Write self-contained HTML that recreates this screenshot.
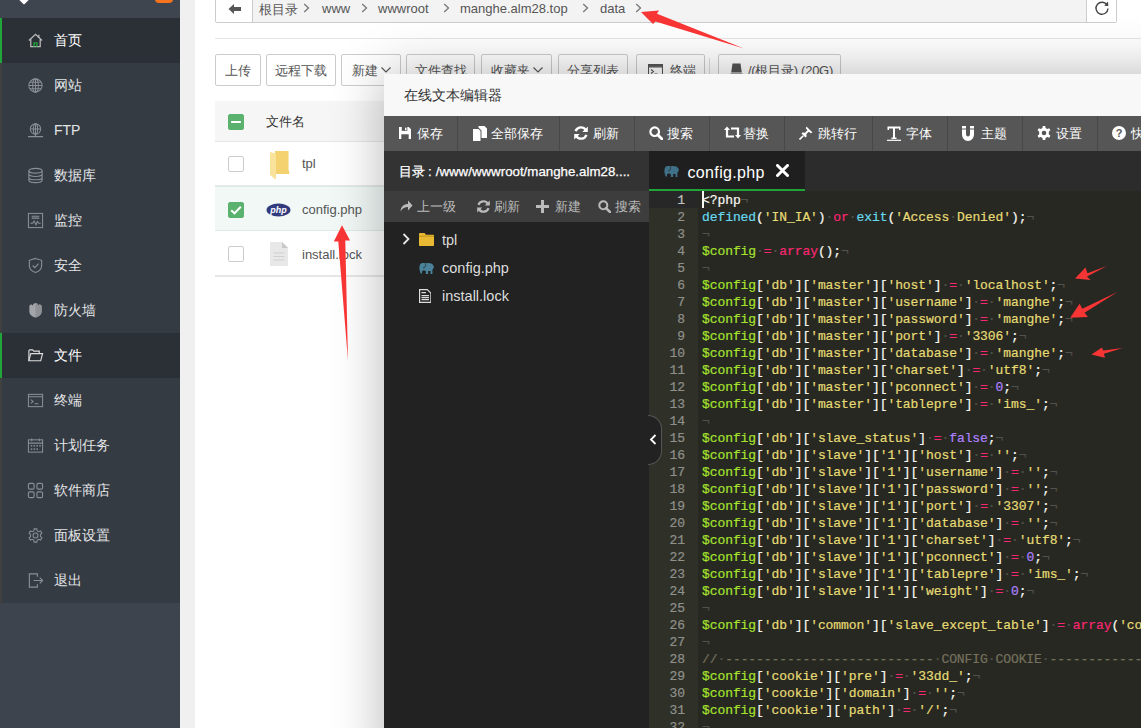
<!DOCTYPE html>
<html><head><meta charset="utf-8">
<style>
*{margin:0;padding:0;box-sizing:border-box}
html,body{width:1141px;height:728px;overflow:hidden;background:#f0f0f0;font-family:"Liberation Sans",sans-serif;font-size:14px;color:#333}
svg{display:block}
#side{position:absolute;left:0;top:0;width:180px;height:728px;background:#3d444d}
#side .top{position:absolute;left:0;top:0;width:180px;height:18px;background:#3e454e}
#side .logo{position:absolute;left:20px;top:-5px;width:8px;height:8px;background:#fff;border-radius:1px;transform:rotate(45deg)}
#side .badge{position:absolute;left:155px;top:-6px;width:18px;height:9px;background:#f7731c;border-radius:4px}
#menu{position:absolute;left:0;top:17.5px;width:180px;height:585px;background:#353b43}
#menu .it{position:absolute;left:0;width:180px;height:45px;color:#e3e5e7;font-size:14px;line-height:45px;padding-left:52px;border-left:2px solid #404040}
#menu .it.on{background:#2b2f36;border-left:2px solid #20a53a;color:#fff}
#menu .ic{position:absolute;left:24.7px;top:14px;width:17px;height:17px}
#main{position:absolute;left:195px;top:0;width:946px;height:728px;background:#fff}
#crumb{position:absolute;left:20px;top:-9px;width:902px;height:32px;background:#f3f3f3;border:1px solid #ccc;border-radius:0 0 2px 2px}
#crumb .back{position:absolute;left:0;top:0;width:37px;height:30px;background:#fff;border-right:1px solid #ccc}
#crumb .back svg{position:absolute;left:12px;top:10.5px}
#crumb .path{position:absolute;left:0;top:8px;height:20px;line-height:18px;font-size:13px;color:#555;white-space:nowrap}
#crumb .path span,#crumb .path i{position:absolute;top:0}
#crumb .path i{font-style:normal;width:7px;margin-left:-3.5px;top:3px}
#crumb .refresh{position:absolute;right:0;top:0;width:30px;height:30px;background:#fff;border-left:1px solid #ccc}
#crumb .refresh svg{position:absolute;left:7px;top:7.5px}
.hsep{position:absolute;left:20px;top:38px;width:926px;height:1px;background:#e6e6e6}
.btn{position:absolute;top:54px;height:32px;border:1px solid #ccc;border-radius:2px;background:#fff;font-size:13px;color:#555;line-height:29px;text-align:center;white-space:nowrap}
.btn .dd{display:inline-block;margin-left:3px;vertical-align:2px}
.btn{line-height:31.5px}
.btn .bi{display:inline-block;margin-right:8px;vertical-align:-2px}
.vsep{position:absolute;left:514px;top:58px;width:1px;height:24px;background:#ddd}
#thead{position:absolute;left:20px;top:100.5px;width:926px;height:41px;background:#f6f6f6;border-bottom:1px solid #e6e6e6}
#thead span{position:absolute;left:51px;top:0;line-height:42px;font-size:13.2px;color:#333}
#thead .cb{top:13px}
.cb{position:absolute;left:13px;top:14px;width:16px;height:16px;border:1px solid #ccc;border-radius:2px;background:#fff}
.cb.green{background:#5ab26e;border-color:#5ab26e}
.cb.green svg{position:absolute;left:-1px;top:-1px}
.cb .minus{position:absolute;left:2px;top:6px;width:10px;height:2px;background:#fff}
.row{position:absolute;left:20px;width:926px;height:45px;border-bottom:1px solid #e8e8e8}
.row.sel{background:#f1f8f6;border-top:1px solid #dbece6;border-bottom:1px solid #dbece6}
.row .cb{top:15px}
.row .fic{position:absolute;left:54px;top:9px}
.row span{position:absolute;left:87px;top:0;line-height:45px;font-size:13px;color:#555}
.row.r3 span{top:1px}
.tline{position:absolute;left:20px;width:926px;height:1px;background:#e6e6e6}
#dlg{position:absolute;left:384px;top:74px;width:900px;height:700px;background:#222;box-shadow:1px 1px 50px rgba(0,0,0,.3)}
#dlg .title{position:absolute;left:0;top:0;width:100%;height:42px;background:#f8f8f8;line-height:42px;padding-left:20px;font-size:14px;color:#333}
#dlg .tools{position:absolute;left:0;top:42px;width:100%;height:35px;background:#565656}
.tb{position:absolute;top:0;height:35px;border-right:1px solid #484848;color:#fff;font-size:13px}
.tb .ti{position:absolute;left:14.5px;top:9.5px}
.tb span{position:absolute;left:33px;top:0;line-height:35px;white-space:nowrap}
#lp{position:absolute;z-index:2;left:0;top:77px;width:264.5px;height:623px;background:#222}
#lp .lh{position:absolute;left:0;top:0;width:100%;height:39.5px;background:#333;color:#fff;font-size:13.3px;line-height:42px;-webkit-text-stroke:0.25px #fff;padding-left:15px;white-space:nowrap;overflow:hidden}
#lp .lt{position:absolute;left:0;top:39.5px;width:100%;height:31px;background:#3d3d3d;color:#bbb;font-size:13px}
#lp .lt span{position:absolute;top:0;line-height:31px;padding-left:17px;white-space:nowrap}
#lp .lt svg{position:absolute;left:0;top:9px}
#lp .tree{position:absolute;left:0;top:69px;width:100%}
.tr{position:absolute;left:0;width:100%;height:24px;color:#ddd;font-size:14.5px}
.tr .arr{position:absolute;left:18px;top:6px}
.tr .tic{position:absolute;left:35px;top:5px}
.tr span{position:absolute;left:58px;top:0;line-height:24px}
.handle{position:absolute;z-index:5;left:264px;top:264px;width:14px;height:50px;background:#222;border:1px solid #555;border-left:none;border-radius:0 16px 16px 0}
.handle svg{position:absolute;left:1px;top:17.5px}
#rp{position:absolute;left:264.5px;top:77px;width:700px;height:623px;background:#272822}
#rp .tabs{position:absolute;left:0;top:0;width:100%;height:40px;background:#2c2c2c}
.tab{position:absolute;left:0;top:0;width:156px;height:40px;background:#1f1f1f;border-bottom:2px solid #20a53a}
.tab .ti2{position:absolute;left:15px;top:14.7px}
.tab span{position:absolute;left:39px;top:1.5px;line-height:40px;font-size:16px;letter-spacing:0.35px;color:#fff}
.tab .x{position:absolute;left:127px;top:13px}
#ed{position:absolute;left:0;top:40px;width:100%;height:600px;background:#272822}
.gut{position:absolute;left:0;top:0;width:49px;height:600px;background:#2f3129;color:#8f908a;text-align:right}
.gut div{padding-right:12.5px}
.code{position:absolute;left:49px;top:0;width:700px;padding-left:4.5px}
.gut div,.code .ln{height:17px;padding-top:1px;line-height:17px;font-family:"Liberation Mono",monospace;font-size:13px;letter-spacing:-0.08px;white-space:pre}
.gut div.act{background:#272727;color:#c2c2bf}
.code .ln:first-child{background:#202020}
.code b{font-weight:normal}
.code .ln,.gut div{-webkit-text-stroke:0.2px currentColor}
.v{color:#a6e22e}.s{color:#e6db74}.k{color:#f92672}.f{color:#66d9ef}.c{color:#ae81ff}.p{color:#f8f8f2}.m{color:#75715e}.i{color:#52524d}
.code .ln{color:#f8f8f2}
.cursor{position:absolute;left:4px;top:0;width:2px;height:17px;background:#f8f8f0}
#arrows{position:absolute;left:0;top:0;width:1141px;height:728px}
</style></head><body>
<div id="side">
  <div class="top"><div class="logo"></div><div class="badge"></div></div>
  <div id="menu">
    <div class="it on" style="top:0"><svg class="ic" viewBox="0 0 18 18"><path d="M2 9 L9 2.5 L16 9 M4 7.5 V15.5 H14 V7.5" fill="none" stroke="#bbb" stroke-width="1.3"/><path d="M7.5 15.5 V11.5 H10.5 V15.5" fill="none" stroke="#20a53a" stroke-width="1.5"/><path d="M12.5 3 V6" stroke="#bbb" stroke-width="1.3"/></svg>首页</div>
    <div class="it" style="top:45px"><svg class="ic" viewBox="0 0 18 18"><g fill="none" stroke="#8a8f96" stroke-width="1.1"><circle cx="9" cy="9" r="7"/><ellipse cx="9" cy="9" rx="3" ry="7"/><path d="M2 9H16M3 5.5H15M3 12.5H15M9 2V16"/></g></svg>网站</div>
    <div class="it" style="top:90px"><svg class="ic" viewBox="0 0 18 18"><g fill="none" stroke="#8a8f96" stroke-width="1.1"><circle cx="9" cy="7.5" r="5.5"/><ellipse cx="9" cy="7.5" rx="2.3" ry="5.5"/><path d="M3.5 7.5H14.5M9 2V13M9 13V15.5M1 15.5H17"/></g></svg>FTP</div>
    <div class="it" style="top:135px"><svg class="ic" viewBox="0 0 18 18"><g fill="none" stroke="#8a8f96" stroke-width="1.2"><ellipse cx="9" cy="4" rx="7" ry="2.5"/><path d="M2 4V14C2 15.5 5 16.5 9 16.5S16 15.5 16 14V4M2 7.5C2 9 5 10 9 10S16 9 16 7.5M2 11C2 12.5 5 13.5 9 13.5S16 12.5 16 11"/></g></svg>数据库</div>
    <div class="it" style="top:180px"><svg class="ic" viewBox="0 0 18 18"><g fill="none" stroke="#8a8f96" stroke-width="1.1"><rect x="1.5" y="1.5" width="15" height="15"/><path d="M3.5 12 L6 12 L7.5 9.5 L9.5 13.5 L11 10 L12.5 12 L14.5 12M5 4.5H13M5 6.5H13"/></g></svg>监控</div>
    <div class="it" style="top:225px"><svg class="ic" viewBox="0 0 18 18"><g fill="none" stroke="#8a8f96" stroke-width="1.2"><path d="M9 1.5 L15.5 3.5 V9 C15.5 13 12 15.5 9 16.5 C6 15.5 2.5 13 2.5 9 V3.5 Z"/><path d="M6 9 L8.3 11.2 L12.2 7"/></g></svg>安全</div>
    <div class="it" style="top:270px"><svg class="ic" viewBox="0 0 18 18"><path d="M2.5 4 L4.5 2.5 L6.5 4 V2 L9 1 L11.5 2 V4 L13.5 2.5 L15.5 4 V10 C15.5 13.5 12 15.5 9 16.5 C6 15.5 2.5 13.5 2.5 10 Z" fill="#a3a5a8"/><path d="M9 1 V16.5 C12 15.5 15.5 13.5 15.5 10 V4 L13.5 2.5 L11.5 4 V2Z" fill="#8d9095"/></svg>防火墙</div>
    <div class="it on" style="top:315px"><svg class="ic" viewBox="0 0 18 18"><g fill="none" stroke="#ddd" stroke-width="1.2"><path d="M2 14.5 V4 C2 3.5 2.3 3 3 3 H6 L7.2 4.3 H13 V6.5"/><path d="M2 14.5 L4 7 H16.5 L14.5 14.5 Z"/></g></svg>文件</div>
    <div class="it" style="top:360px"><svg class="ic" viewBox="0 0 18 18"><g fill="none" stroke="#8a8f96" stroke-width="1.1"><rect x="1.5" y="2.5" width="15" height="13"/><path d="M1.5 5H16.5M4 8L6.5 10L4 12M8 12.5H12"/></g></svg>终端</div>
    <div class="it" style="top:405px"><svg class="ic" viewBox="0 0 18 18"><g fill="none" stroke="#8a8f96" stroke-width="1.1"><rect x="1.5" y="3" width="15" height="13"/><path d="M5 1.5V4.5M13 1.5V4.5M1.5 6.5H16.5"/></g><g fill="#8a8f96"><rect x="4" y="8.5" width="1.6" height="1.6"/><rect x="7" y="8.5" width="1.6" height="1.6"/><rect x="10" y="8.5" width="1.6" height="1.6"/><rect x="13" y="8.5" width="1.6" height="1.6"/><rect x="4" y="12" width="1.6" height="1.6"/><rect x="7" y="12" width="1.6" height="1.6"/><rect x="10" y="12" width="1.6" height="1.6"/></g></svg>计划任务</div>
    <div class="it" style="top:450px"><svg class="ic" viewBox="0 0 18 18"><g fill="none" stroke="#8a8f96" stroke-width="1.2"><rect x="1.5" y="1.5" width="6" height="6" rx="1.5"/><rect x="10.5" y="1.5" width="6" height="6" rx="1.5"/><rect x="1.5" y="10.5" width="6" height="6" rx="1.5"/><rect x="10.5" y="10.5" width="6" height="6" rx="1.5"/></g></svg>软件商店</div>
    <div class="it" style="top:495px"><svg class="ic" viewBox="0 0 18 18"><g fill="none" stroke="#8a8f96" stroke-width="1.1"><path d="M7.6 1.5H10.4L10.8 3.6L12.4 4.5L14.4 3.7L15.8 6.1L14.2 7.5V9.5L15.8 10.9L14.4 13.3L12.4 12.5L10.8 13.4L10.4 15.5H7.6L7.2 13.4L5.6 12.5L3.6 13.3L2.2 10.9L3.8 9.5V7.5L2.2 6.1L3.6 3.7L5.6 4.5L7.2 3.6Z" transform="translate(0 0.5)"/><circle cx="9" cy="9" r="2.6"/></g></svg>面板设置</div>
    <div class="it" style="top:540px"><svg class="ic" viewBox="0 0 18 18"><g fill="none" stroke="#8a8f96" stroke-width="1.2"><path d="M11 5V2H2.5V16H11V13"/><path d="M7 9H16.5M13.5 6L16.5 9L13.5 12"/></g></svg>退出</div>
  </div>
</div>
<div id="main">
  <div id="crumb">
    <div class="back"><svg width="14" height="12" viewBox="0 0 14 12"><path d="M0.5 6 L6 1 V4 H13 V8 H6 V11 Z" fill="#555"/></svg></div>
    <div class="path"><span style="left:43px;font-size:12.6px;top:0.5px">根目录</span><i style="left:90.5px"><svg width="7" height="10" viewBox="0 0 7 10"><path d="M1.2 1 L5.5 5 L1.2 9" fill="none" stroke="#777" stroke-width="1.3"/></svg></i><span style="left:106px">www</span><i style="left:148.0px"><svg width="7" height="10" viewBox="0 0 7 10"><path d="M1.2 1 L5.5 5 L1.2 9" fill="none" stroke="#777" stroke-width="1.3"/></svg></i><span style="left:162px">wwwroot</span><i style="left:230.7px"><svg width="7" height="10" viewBox="0 0 7 10"><path d="M1.2 1 L5.5 5 L1.2 9" fill="none" stroke="#777" stroke-width="1.3"/></svg></i><span style="left:244px">manghe.alm28.top</span><i style="left:369.6px"><svg width="7" height="10" viewBox="0 0 7 10"><path d="M1.2 1 L5.5 5 L1.2 9" fill="none" stroke="#777" stroke-width="1.3"/></svg></i><span style="left:384px">data</span><i style="left:422.0px"><svg width="7" height="10" viewBox="0 0 7 10"><path d="M1.2 1 L5.5 5 L1.2 9" fill="none" stroke="#777" stroke-width="1.3"/></svg></i></div>
    <div class="refresh"><svg width="16" height="16" viewBox="0 0 16 16"><path d="M13.2 5.2 A6 6 0 1 0 14 8.5" fill="none" stroke="#444" stroke-width="1.4"/><path d="M10.2 5.8 L14.3 6 L14 1.6 Z" fill="#444"/></svg></div>
  </div>
  <div class="hsep"></div>
  <div class="btn" style="left:20px;width:46px">上传</div>
  <div class="btn" style="left:71px;width:70px">远程下载</div>
  <div class="btn" style="left:146px;width:60px">新建<svg class="dd" width="10" height="6" viewBox="0 0 10 6"><path d="M0.5 0.5 L5 5 L9.5 0.5" fill="none" stroke="#555" stroke-width="1.1"/></svg></div>
  <div class="btn" style="left:211px;width:69px">文件查找</div>
  <div class="btn" style="left:286px;width:71px">收藏夹<svg class="dd" width="10" height="6" viewBox="0 0 10 6"><path d="M0.5 0.5 L5 5 L9.5 0.5" fill="none" stroke="#555" stroke-width="1.1"/></svg></div>
  <div class="btn" style="left:363px;width:70px">分享列表</div>
  <div class="btn" style="left:441px;width:69px"><svg class="bi" width="15" height="13" viewBox="0 0 15 13" style="margin-right:7px;margin-left:3px"><g fill="none" stroke="#555" stroke-width="1.1"><rect x="0.5" y="0.5" width="14" height="12"/><path d="M0.5 3H14.5M3 5.5L5.5 7.5L3 9.5M6.5 10H9.5"/></g><path d="M1 1H14V2.8H1Z" fill="#555"/></svg>终端</div>
  <div class="vsep"></div>
  <div class="btn" style="left:523px;width:123px"><svg class="bi" width="13" height="14" viewBox="0 0 13 14" style="margin-right:5px;margin-left:4px"><path d="M2.5 0.5H10.5L11.8 9.5H1.2Z M0.5 10.5H12.5V13.5H0.5Z" fill="#555"/></svg><span style="letter-spacing:-0.25px">/(根目录) (20G)</span></div>
  <div id="thead"><div class="cb green"><div class="minus"></div></div><span>文件名</span></div>
  <div class="row" style="top:141px"><div class="cb"></div><svg class="fic" width="20" height="29" viewBox="0 0 20 29" style="left:54.5px;top:10px"><path d="M5 0 H18.5 V18 L19.5 23 H5 Z" fill="#f3d26f"/><path d="M0 1 L6 2.5 V28 L5.5 28.5 L0 24 Z" fill="#f9e29a"/></svg><span>tpl</span></div>
  <div class="row sel" style="top:186px"><div class="cb green"><svg width="16" height="16" viewBox="0 0 16 16"><path d="M3.2 8.2 L6.5 11.3 L12.8 4.8" fill="none" stroke="#fff" stroke-width="2"/></svg></div><svg class="fic" width="25" height="14" viewBox="0 0 25 14" style="top:16px;left:51px"><ellipse cx="12.5" cy="7" rx="12" ry="6.5" fill="#313b7e"/><text x="12.5" y="10" font-family="Liberation Sans" font-size="9" font-style="italic" font-weight="bold" fill="#fff" text-anchor="middle">php</text></svg><span>config.php</span></div>
  <div class="row r3" style="top:231px"><div class="cb"></div><svg class="fic" width="18" height="24" viewBox="0 0 18 24" style="top:11px;left:55px"><path d="M0 0 H12 L18 6 V24 H0 Z" fill="#e8e8e8"/><path d="M12 0 L18 6 H12Z" fill="#c8c8c8"/><path d="M3.5 11H14.5M3.5 14.5H14.5M3.5 18H14.5" stroke="#d0d0d0" stroke-width="1.2"/></svg><span>install.lock</span></div>
  <div class="tline" style="top:276px"></div>
</div>
<div id="dlg">
  <div class="title">在线文本编辑器</div>
  <div class="tools">
    <div class="tb" style="left:0;width:74px"><svg class="ti" width="12" height="12" viewBox="0 0 13 14" preserveAspectRatio="none" style="left:15px;top:11px"><path d="M0 0H10.5L13 2.5V14H0Z" fill="#fff"/><rect x="3" y="0" width="6" height="4.5" fill="#565656"/><rect x="6.5" y="0.8" width="1.6" height="3" fill="#fff"/><rect x="2.5" y="8.5" width="8" height="5.5" fill="#565656"/></svg><span>保存</span></div>
    <div class="tb" style="left:74px;width:101.5px"><svg class="ti" width="14" height="15" viewBox="0 0 14 15"><path d="M0 3H5.5L7.5 5V15H0Z" fill="#fff"/><path d="M5.5 0H11.5L14 2.5V12H8.5V4.5L5.5 1.5Z" fill="#fff"/></svg><span>全部保存</span></div>
    <div class="tb" style="left:175.5px;width:75px"><svg class="ti" width="14" height="14" viewBox="0 0 14 14"><path d="M11.8 4.2 A5.6 5.6 0 0 0 1.6 5.2" fill="none" stroke="#fff" stroke-width="2.4"/><path d="M2.2 9.8 A5.6 5.6 0 0 0 12.4 8.8" fill="none" stroke="#fff" stroke-width="2.4"/><path d="M13.8 0.5 V6 H8.3Z" fill="#fff"/><path d="M0.2 13.5 V8 H5.7Z" fill="#fff"/></svg><span>刷新</span></div>
    <div class="tb" style="left:250px;width:75.5px"><svg class="ti" width="14" height="14" viewBox="0 0 14 14"><circle cx="5.7" cy="5.7" r="4.3" fill="none" stroke="#fff" stroke-width="2.2"/><path d="M8.7 8.7 L13 13" stroke="#fff" stroke-width="2.8" stroke-linecap="round"/></svg><span>搜索</span></div>
    <div class="tb" style="left:325.5px;width:75px"><svg class="ti" width="17" height="13" viewBox="0 0 17 13"><path d="M3 3V10.5H10" fill="none" stroke="#fff" stroke-width="2.2"/><path d="M0 4L3 0.5L6 4Z" fill="#fff"/><path d="M14 10V2.5H7" fill="none" stroke="#fff" stroke-width="2.2"/><path d="M11 9L14 12.5L17 9Z" fill="#fff"/></svg><span>替换</span></div>
    <div class="tb" style="left:400.5px;width:88px"><svg class="ti" width="14" height="14" viewBox="0 0 14 14"><path d="M7.5 0.5 L13.5 6.5 L11.8 7.2 L9.8 5.7 L7.4 8.1 L7.6 10.6 L6.5 11.6 L2.5 7.6 L3.5 6.5 L6 6.7 L8.4 4.3 L6.8 2.2Z" fill="#fff"/><path d="M4.3 9.7 L0.5 13.5" stroke="#fff" stroke-width="1.6"/></svg><span>跳转行</span></div>
    <div class="tb" style="left:488.5px;width:75px"><svg class="ti" width="14" height="15" viewBox="0 0 14 15"><path d="M0.5 0.5H13.5V4H12V2.5H8V11.5H9.5V13H4.5V11.5H6V2.5H2V4H0.5Z" fill="#fff"/><path d="M0 14.3H14" stroke="#fff" stroke-width="1.2"/></svg><span>字体</span></div>
    <div class="tb" style="left:563.5px;width:75px"><svg class="ti" width="12" height="15" viewBox="0 0 12 15"><path d="M0 0H4V8C4 9.5 4.8 10.5 6 10.5S8 9.5 8 8V0H12V8C12 12 9.5 15 6 15S0 12 0 8Z" fill="#fff"/><path d="M0 3H4M8 3H12" stroke="#565656" stroke-width="1"/></svg><span>主题</span></div>
    <div class="tb" style="left:638.5px;width:75px"><svg class="ti" width="14" height="14" viewBox="0 0 14 14"><path d="M5.8 0H8.2L8.6 2.1L10.2 3L12.2 2.2L13.4 4.3L11.8 5.7V8.3L13.4 9.7L12.2 11.8L10.2 11L8.6 11.9L8.2 14H5.8L5.4 11.9L3.8 11L1.8 11.8L0.6 9.7L2.2 8.3V5.7L0.6 4.3L1.8 2.2L3.8 3L5.4 2.1Z" fill="#fff"/><circle cx="7" cy="7" r="2.3" fill="#565656"/></svg><span>设置</span></div>
    <div class="tb" style="left:713.5px;width:75px"><svg class="ti" width="14" height="14" viewBox="0 0 14 14"><circle cx="7" cy="7" r="7" fill="#fff"/><text x="7" y="11" font-family="Liberation Sans" font-weight="bold" font-size="11" fill="#565656" text-anchor="middle">?</text></svg><span>快捷键</span></div>
  </div>
  <div id="lp">
    <div class="lh">目录<span style="margin:0 4px 0 3px">:</span>/www/wwwroot/manghe.alm28....</div>
    <div class="lt">
      <span style="left:16px"><svg width="13" height="12" viewBox="0 0 13 12"><path d="M0.5 11.5 C1 6 4 4 8 4 V0.5 L12.5 5.5 L8 10.5 V7 C5 7 2.5 8 0.5 11.5Z" fill="#bbb"/></svg>上一级</span>
      <span style="left:93px"><svg width="13" height="13" viewBox="0 0 14 14"><path d="M11.8 4.2 A5.6 5.6 0 0 0 1.6 5.2" fill="none" stroke="#bbb" stroke-width="2.4"/><path d="M2.2 9.8 A5.6 5.6 0 0 0 12.4 8.8" fill="none" stroke="#bbb" stroke-width="2.4"/><path d="M13.8 0.5 V6 H8.3Z" fill="#bbb"/><path d="M0.2 13.5 V8 H5.7Z" fill="#bbb"/></svg>刷新</span>
      <span style="left:152px;padding-left:19px"><svg width="13" height="13" viewBox="0 0 13 13"><path d="M5 0H8V5H13V8H8V13H5V8H0V5H5Z" fill="#bbb"/></svg>新建</span>
      <span style="left:214px"><svg width="13" height="13" viewBox="0 0 14 14"><circle cx="5.7" cy="5.7" r="4.3" fill="none" stroke="#bbb" stroke-width="2.2"/><path d="M8.7 8.7 L13 13" stroke="#bbb" stroke-width="2.8" stroke-linecap="round"/></svg>搜索</span>
    </div>
    <div class="tree">
      <div class="tr" style="top:8px"><svg class="arr" width="8" height="12" viewBox="0 0 8 12" style="top:5px"><path d="M1.5 1 L6.5 6 L1.5 11" fill="none" stroke="#e6e6e6" stroke-width="1.8"/></svg><svg class="tic" width="15" height="13" viewBox="0 0 15 13"><path d="M0 1C0 0.5 0.4 0 1 0H5.5L7 1.8H14C14.6 1.8 15 2.2 15 2.8V12C15 12.6 14.6 13 14 13H1C0.4 13 0 12.6 0 12Z" fill="#e9b934"/><path d="M0 3.2H15" stroke="#b88b12" stroke-width="0.8"/></svg><span>tpl</span></div>
      <div class="tr" style="top:36px"><svg class="tic" width="15" height="11" viewBox="0 0 14.3 10.4" style="top:7px"><path d="M1 1.5 C1.5 0.3 3 0 4.5 0 L6.5 0.2 C7 0.1 7.5 0 8.5 0 C11.5 0 13.5 1 14.3 3.5 L13.5 5.5 L12.8 6.5 V10.4 H11 V7.5 H8.7 V10.4 H6.5 V7.5 L5 7 L4 7.2 L3 7.5 L2.8 10 H1.5 L1 8 C0.3 6.5 0 4 1 1.5 Z" fill="#4a8299"/><path d="M6.6 0.4 C6 2 6.2 3.8 5 4.6 L3.8 4.4" fill="none" stroke="#222" stroke-width="0.6"/></svg><span>config.php</span></div>
      <div class="tr" style="top:64px"><svg class="tic" width="12.5" height="14" viewBox="0 0 12.5 14" style="left:34.5px;top:5px"><path d="M0.6 0.6H8.3L11.9 4.2V13.4H0.6Z" fill="none" stroke="#ddd" stroke-width="1.2"/><path d="M2.5 3.6H7M2.5 6.6H10M2.5 8.6H10M2.5 10.6H10" stroke="#ddd" stroke-width="1.1"/></svg><span>install.lock</span></div>
    </div>
    <div class="handle"><svg width="8" height="11" viewBox="0 0 8 11"><path d="M6.5 1 L2 5.5 L6.5 10" fill="none" stroke="#fff" stroke-width="1.8"/></svg></div>
  </div>
  <div id="rp">
    <div class="tabs"><div class="tab"><svg class="ti2" width="15" height="11" viewBox="0 0 14.3 10.4"><path d="M1 1.5 C1.5 0.3 3 0 4.5 0 L6.5 0.2 C7 0.1 7.5 0 8.5 0 C11.5 0 13.5 1 14.3 3.5 L13.5 5.5 L12.8 6.5 V10.4 H11 V7.5 H8.7 V10.4 H6.5 V7.5 L5 7 L4 7.2 L3 7.5 L2.8 10 H1.5 L1 8 C0.3 6.5 0 4 1 1.5 Z" fill="#3f7189"/><path d="M6.6 0.4 C6 2 6.2 3.8 5 4.6 L3.8 4.4" fill="none" stroke="#1f1f1f" stroke-width="0.6"/></svg><span>config.php</span><svg class="x" width="13" height="13" viewBox="0 0 13 13"><path d="M1.5 1.5L11.5 11.5M11.5 1.5L1.5 11.5" stroke="#fff" stroke-width="3" stroke-linecap="round"/></svg></div></div>
    <div id="ed">
      <div class="gut"><div class="act">1</div><div>2</div><div>3</div><div>4</div><div>5</div><div>6</div><div>7</div><div>8</div><div>9</div><div>10</div><div>11</div><div>12</div><div>13</div><div>14</div><div>15</div><div>16</div><div>17</div><div>18</div><div>19</div><div>20</div><div>21</div><div>22</div><div>23</div><div>24</div><div>25</div><div>26</div><div>27</div><div>28</div><div>29</div><div>30</div><div>31</div><div>32</div><div>33</div></div>
      <div class="code"><div class="cursor"></div><div class="ln">&lt;?php<b class="i">¬</b></div>
<div class="ln"><b class="f">defined</b><b class="p">(</b><b class="s">&#x27;IN_IA&#x27;</b><b class="p">)</b><b class="i">·</b><b class="k">or</b><b class="i">·</b><b class="f">exit</b><b class="p">(</b><b class="s">&#x27;Access</b><b class="i">·</b><b class="s">Denied&#x27;</b><b class="p">);</b><b class="i">¬</b></div>
<div class="ln"><b class="i">¬</b></div>
<div class="ln"><b class="v">$config</b><b class="i">·</b><b class="k">=</b><b class="i">·</b><b class="k">array</b><b class="p">();</b><b class="i">¬</b></div>
<div class="ln"><b class="i">¬</b></div>
<div class="ln"><b class="v">$config</b><b class="p">[</b><b class="s">&#x27;db&#x27;</b><b class="p">]</b><b class="p">[</b><b class="s">&#x27;master&#x27;</b><b class="p">]</b><b class="p">[</b><b class="s">&#x27;host&#x27;</b><b class="p">]</b><b class="i">·</b><b class="k">=</b><b class="i">·</b><b class="s">&#x27;localhost&#x27;</b><b class="p">;</b><b class="i">¬</b></div>
<div class="ln"><b class="v">$config</b><b class="p">[</b><b class="s">&#x27;db&#x27;</b><b class="p">]</b><b class="p">[</b><b class="s">&#x27;master&#x27;</b><b class="p">]</b><b class="p">[</b><b class="s">&#x27;username&#x27;</b><b class="p">]</b><b class="i">·</b><b class="k">=</b><b class="i">·</b><b class="s">&#x27;manghe&#x27;</b><b class="p">;</b><b class="i">¬</b></div>
<div class="ln"><b class="v">$config</b><b class="p">[</b><b class="s">&#x27;db&#x27;</b><b class="p">]</b><b class="p">[</b><b class="s">&#x27;master&#x27;</b><b class="p">]</b><b class="p">[</b><b class="s">&#x27;password&#x27;</b><b class="p">]</b><b class="i">·</b><b class="k">=</b><b class="i">·</b><b class="s">&#x27;manghe&#x27;</b><b class="p">;</b><b class="i">¬</b></div>
<div class="ln"><b class="v">$config</b><b class="p">[</b><b class="s">&#x27;db&#x27;</b><b class="p">]</b><b class="p">[</b><b class="s">&#x27;master&#x27;</b><b class="p">]</b><b class="p">[</b><b class="s">&#x27;port&#x27;</b><b class="p">]</b><b class="i">·</b><b class="k">=</b><b class="i">·</b><b class="s">&#x27;3306&#x27;</b><b class="p">;</b><b class="i">¬</b></div>
<div class="ln"><b class="v">$config</b><b class="p">[</b><b class="s">&#x27;db&#x27;</b><b class="p">]</b><b class="p">[</b><b class="s">&#x27;master&#x27;</b><b class="p">]</b><b class="p">[</b><b class="s">&#x27;database&#x27;</b><b class="p">]</b><b class="i">·</b><b class="k">=</b><b class="i">·</b><b class="s">&#x27;manghe&#x27;</b><b class="p">;</b><b class="i">¬</b></div>
<div class="ln"><b class="v">$config</b><b class="p">[</b><b class="s">&#x27;db&#x27;</b><b class="p">]</b><b class="p">[</b><b class="s">&#x27;master&#x27;</b><b class="p">]</b><b class="p">[</b><b class="s">&#x27;charset&#x27;</b><b class="p">]</b><b class="i">·</b><b class="k">=</b><b class="i">·</b><b class="s">&#x27;utf8&#x27;</b><b class="p">;</b><b class="i">¬</b></div>
<div class="ln"><b class="v">$config</b><b class="p">[</b><b class="s">&#x27;db&#x27;</b><b class="p">]</b><b class="p">[</b><b class="s">&#x27;master&#x27;</b><b class="p">]</b><b class="p">[</b><b class="s">&#x27;pconnect&#x27;</b><b class="p">]</b><b class="i">·</b><b class="k">=</b><b class="i">·</b><b class="c">0</b><b class="p">;</b><b class="i">¬</b></div>
<div class="ln"><b class="v">$config</b><b class="p">[</b><b class="s">&#x27;db&#x27;</b><b class="p">]</b><b class="p">[</b><b class="s">&#x27;master&#x27;</b><b class="p">]</b><b class="p">[</b><b class="s">&#x27;tablepre&#x27;</b><b class="p">]</b><b class="i">·</b><b class="k">=</b><b class="i">·</b><b class="s">&#x27;ims_&#x27;</b><b class="p">;</b><b class="i">¬</b></div>
<div class="ln"><b class="i">¬</b></div>
<div class="ln"><b class="v">$config</b><b class="p">[</b><b class="s">&#x27;db&#x27;</b><b class="p">]</b><b class="p">[</b><b class="s">&#x27;slave_status&#x27;</b><b class="p">]</b><b class="i">·</b><b class="k">=</b><b class="i">·</b><b class="c">false</b><b class="p">;</b><b class="i">¬</b></div>
<div class="ln"><b class="v">$config</b><b class="p">[</b><b class="s">&#x27;db&#x27;</b><b class="p">]</b><b class="p">[</b><b class="s">&#x27;slave&#x27;</b><b class="p">]</b><b class="p">[</b><b class="s">&#x27;1&#x27;</b><b class="p">]</b><b class="p">[</b><b class="s">&#x27;host&#x27;</b><b class="p">]</b><b class="i">·</b><b class="k">=</b><b class="i">·</b><b class="s">&#x27;&#x27;</b><b class="p">;</b><b class="i">¬</b></div>
<div class="ln"><b class="v">$config</b><b class="p">[</b><b class="s">&#x27;db&#x27;</b><b class="p">]</b><b class="p">[</b><b class="s">&#x27;slave&#x27;</b><b class="p">]</b><b class="p">[</b><b class="s">&#x27;1&#x27;</b><b class="p">]</b><b class="p">[</b><b class="s">&#x27;username&#x27;</b><b class="p">]</b><b class="i">·</b><b class="k">=</b><b class="i">·</b><b class="s">&#x27;&#x27;</b><b class="p">;</b><b class="i">¬</b></div>
<div class="ln"><b class="v">$config</b><b class="p">[</b><b class="s">&#x27;db&#x27;</b><b class="p">]</b><b class="p">[</b><b class="s">&#x27;slave&#x27;</b><b class="p">]</b><b class="p">[</b><b class="s">&#x27;1&#x27;</b><b class="p">]</b><b class="p">[</b><b class="s">&#x27;password&#x27;</b><b class="p">]</b><b class="i">·</b><b class="k">=</b><b class="i">·</b><b class="s">&#x27;&#x27;</b><b class="p">;</b><b class="i">¬</b></div>
<div class="ln"><b class="v">$config</b><b class="p">[</b><b class="s">&#x27;db&#x27;</b><b class="p">]</b><b class="p">[</b><b class="s">&#x27;slave&#x27;</b><b class="p">]</b><b class="p">[</b><b class="s">&#x27;1&#x27;</b><b class="p">]</b><b class="p">[</b><b class="s">&#x27;port&#x27;</b><b class="p">]</b><b class="i">·</b><b class="k">=</b><b class="i">·</b><b class="s">&#x27;3307&#x27;</b><b class="p">;</b><b class="i">¬</b></div>
<div class="ln"><b class="v">$config</b><b class="p">[</b><b class="s">&#x27;db&#x27;</b><b class="p">]</b><b class="p">[</b><b class="s">&#x27;slave&#x27;</b><b class="p">]</b><b class="p">[</b><b class="s">&#x27;1&#x27;</b><b class="p">]</b><b class="p">[</b><b class="s">&#x27;database&#x27;</b><b class="p">]</b><b class="i">·</b><b class="k">=</b><b class="i">·</b><b class="s">&#x27;&#x27;</b><b class="p">;</b><b class="i">¬</b></div>
<div class="ln"><b class="v">$config</b><b class="p">[</b><b class="s">&#x27;db&#x27;</b><b class="p">]</b><b class="p">[</b><b class="s">&#x27;slave&#x27;</b><b class="p">]</b><b class="p">[</b><b class="s">&#x27;1&#x27;</b><b class="p">]</b><b class="p">[</b><b class="s">&#x27;charset&#x27;</b><b class="p">]</b><b class="i">·</b><b class="k">=</b><b class="i">·</b><b class="s">&#x27;utf8&#x27;</b><b class="p">;</b><b class="i">¬</b></div>
<div class="ln"><b class="v">$config</b><b class="p">[</b><b class="s">&#x27;db&#x27;</b><b class="p">]</b><b class="p">[</b><b class="s">&#x27;slave&#x27;</b><b class="p">]</b><b class="p">[</b><b class="s">&#x27;1&#x27;</b><b class="p">]</b><b class="p">[</b><b class="s">&#x27;pconnect&#x27;</b><b class="p">]</b><b class="i">·</b><b class="k">=</b><b class="i">·</b><b class="c">0</b><b class="p">;</b><b class="i">¬</b></div>
<div class="ln"><b class="v">$config</b><b class="p">[</b><b class="s">&#x27;db&#x27;</b><b class="p">]</b><b class="p">[</b><b class="s">&#x27;slave&#x27;</b><b class="p">]</b><b class="p">[</b><b class="s">&#x27;1&#x27;</b><b class="p">]</b><b class="p">[</b><b class="s">&#x27;tablepre&#x27;</b><b class="p">]</b><b class="i">·</b><b class="k">=</b><b class="i">·</b><b class="s">&#x27;ims_&#x27;</b><b class="p">;</b><b class="i">¬</b></div>
<div class="ln"><b class="v">$config</b><b class="p">[</b><b class="s">&#x27;db&#x27;</b><b class="p">]</b><b class="p">[</b><b class="s">&#x27;slave&#x27;</b><b class="p">]</b><b class="p">[</b><b class="s">&#x27;1&#x27;</b><b class="p">]</b><b class="p">[</b><b class="s">&#x27;weight&#x27;</b><b class="p">]</b><b class="i">·</b><b class="k">=</b><b class="i">·</b><b class="c">0</b><b class="p">;</b><b class="i">¬</b></div>
<div class="ln"><b class="i">¬</b></div>
<div class="ln"><b class="v">$config</b><b class="p">[</b><b class="s">&#x27;db&#x27;</b><b class="p">]</b><b class="p">[</b><b class="s">&#x27;common&#x27;</b><b class="p">]</b><b class="p">[</b><b class="s">&#x27;slave_except_table&#x27;</b><b class="p">]</b><b class="i">·</b><b class="k">=</b><b class="i">·</b><b class="k">array</b><b class="p">(</b><b class="s">&#x27;common_session&#x27;</b></div>
<div class="ln"><b class="i">¬</b></div>
<div class="ln"><b class="m">//</b><b class="i">·</b><b class="m">---------------------------</b><b class="i">·</b><b class="m">CONFIG</b><b class="i">·</b><b class="m">COOKIE</b><b class="i">·</b><b class="m">---------------------------</b></div>
<div class="ln"><b class="v">$config</b><b class="p">[</b><b class="s">&#x27;cookie&#x27;</b><b class="p">]</b><b class="p">[</b><b class="s">&#x27;pre&#x27;</b><b class="p">]</b><b class="i">·</b><b class="k">=</b><b class="i">·</b><b class="s">&#x27;33dd_&#x27;</b><b class="p">;</b><b class="i">¬</b></div>
<div class="ln"><b class="v">$config</b><b class="p">[</b><b class="s">&#x27;cookie&#x27;</b><b class="p">]</b><b class="p">[</b><b class="s">&#x27;domain&#x27;</b><b class="p">]</b><b class="i">·</b><b class="k">=</b><b class="i">·</b><b class="s">&#x27;&#x27;</b><b class="p">;</b><b class="i">¬</b></div>
<div class="ln"><b class="v">$config</b><b class="p">[</b><b class="s">&#x27;cookie&#x27;</b><b class="p">]</b><b class="p">[</b><b class="s">&#x27;path&#x27;</b><b class="p">]</b><b class="i">·</b><b class="k">=</b><b class="i">·</b><b class="s">&#x27;/&#x27;</b><b class="p">;</b><b class="i">¬</b></div>
<div class="ln"><b class="i">¬</b></div>
<div class="ln"><b class="i">¬</b></div></div>
    </div>
  </div>
</div>
<svg id="arrows" width="1141" height="728" viewBox="0 0 1141 728">
<g fill="#f83535">
<path d="M641 12 L659 10.4 L657 13.8 L744 48.5 L655.5 21.5 L653 24 Z"/>
<path d="M342 225.2 L350 240.5 L345.3 240.5 L348 360.7 L338.3 241.6 L333.8 241.6 Z"/>
<path d="M1075.1 278.4 L1085.4 267.5 L1087.5 273.2 L1107 266 L1087 276.5 L1090.6 280 Z"/>
<path d="M1070.2 317.7 L1079.6 303.7 L1082.3 308.8 L1117.4 292 L1084.5 312.8 L1088 317 Z"/>
<path d="M1091.4 354.5 L1102 347.5 L1103.2 350.6 L1122.9 348 L1103.8 353.8 L1105 357.8 Z"/>
</g></svg>
</body></html>
